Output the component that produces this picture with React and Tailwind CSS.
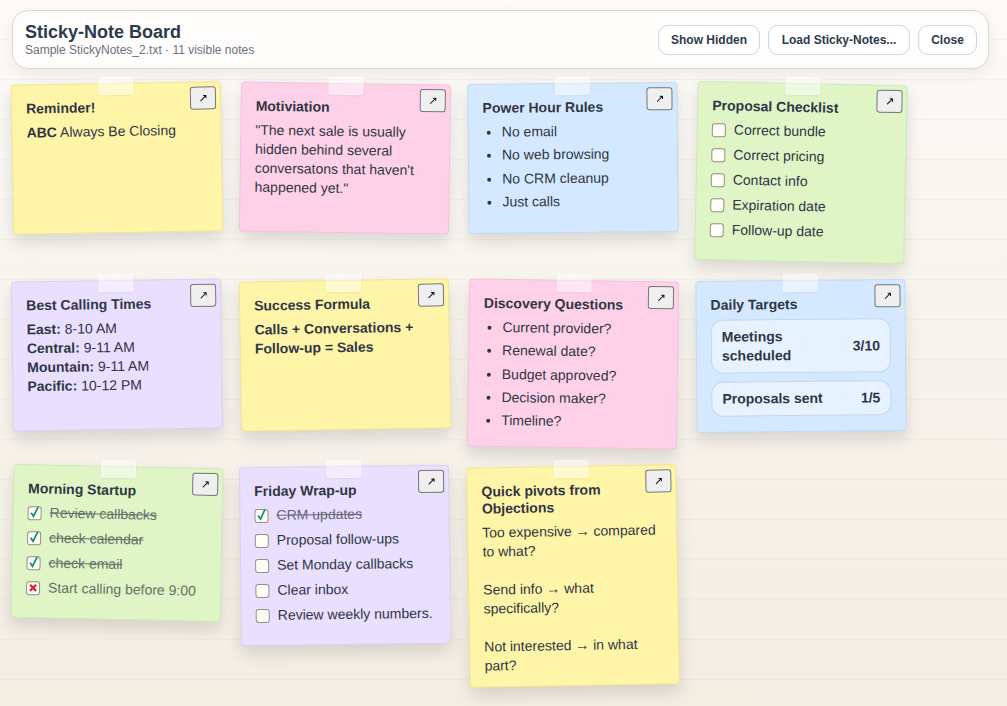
import { Fragment } from "react";

const notes = [
  { title: "Reminder!", color: "bg-[#fff5a8] border-[#f3e58f]", tilt: "rotate-[-1deg]", kind: "abc" },
  { title: "Motiviation", color: "bg-[#ffd1e8] border-[#f3c2da]", tilt: "rotate-[0.8deg]", kind: "quote" },
  {
    title: "Power Hour Rules",
    color: "bg-[#d4e9ff] border-[#c3daf2]",
    tilt: "rotate-[-0.5deg]",
    kind: "list",
    items: ["No email", "No web browsing", "No CRM cleanup", "Just calls"],
  },
  {
    title: "Proposal Checklist",
    color: "bg-[#dff5c6] border-[#d0e8b6]",
    tilt: "rotate-[1.2deg]",
    kind: "check",
    items: [
      ["Correct bundle"],
      ["Correct pricing"],
      ["Contact info"],
      ["Expiration date"],
      ["Follow-up date"],
    ],
  },
  { title: "Best Calling Times", color: "bg-[#e9dfff] border-[#dbd0f2]", tilt: "rotate-[-0.8deg]", kind: "times" },
  { title: "Success Formula", color: "bg-[#fff5a8] border-[#f3e58f]", tilt: "rotate-[-1deg]", kind: "formula" },
  {
    title: "Discovery Questions",
    color: "bg-[#ffd1e8] border-[#f3c2da]",
    tilt: "rotate-[0.8deg]",
    kind: "list",
    items: ["Current provider?", "Renewal date?", "Budget approved?", "Decision maker?", "Timeline?"],
  },
  { title: "Daily Targets", color: "bg-[#d4e9ff] border-[#c3daf2]", tilt: "rotate-[-0.5deg]", kind: "targets" },
  {
    title: "Morning Startup",
    color: "bg-[#dff5c6] border-[#d0e8b6]",
    tilt: "rotate-[1.2deg]",
    kind: "check",
    items: [
      ["Review callbacks", "done"],
      ["check calendar", "done"],
      ["check email", "done"],
      ["Start calling before 9:00", "missed"],
    ],
  },
  {
    title: "Friday Wrap-up",
    color: "bg-[#e9dfff] border-[#dbd0f2]",
    tilt: "rotate-[-0.7deg]",
    kind: "check",
    items: [
      ["CRM updates", "done"],
      ["Proposal follow-ups"],
      ["Set Monday callbacks"],
      ["Clear inbox"],
      ["Review weekly numbers."],
    ],
  },
  { title: "Quick pivots from Objections", color: "bg-[#fff5a8] border-[#f3e58f]", tilt: "rotate-[-1deg]", kind: "pivots" },
];

const times = [
  ["East:", "8-10 AM"],
  ["Central:", "9-11 AM"],
  ["Mountain:", "9-11 AM"],
  ["Pacific:", "10-12 PM"],
];

function Box({ state }) {
  return (
    <span className="flex h-[14px] w-[14px] shrink-0 items-center justify-center rounded-[3px] border border-[#9a8f80] bg-[#fffdf6]">
      {state === "done" && (
        <svg viewBox="0 0 14 14" className="h-[14px] w-[14px] -translate-y-[1px] overflow-visible">
          <path d="M3.5 7.5 L6 11 L10.5 1.5" fill="none" stroke="#0f8f6f" strokeWidth="1.7" />
        </svg>
      )}
      {state === "missed" && (
        <svg viewBox="0 0 14 14" className="h-[14px] w-[14px]">
          <path d="M3.5 3 L10.5 10 M10.5 3 L3.5 10" fill="none" stroke="#e0202c" strokeWidth="2.6" />
        </svg>
      )}
    </span>
  );
}

function NoteBody({ note }) {
  // ✅ BODY BY NOTE TYPE
  if (note.kind === "abc") {
    return (
      <p>
        <b>ABC</b> Always Be Closing
      </p>
    );
  }

  if (note.kind === "quote") {
    return <p>"The next sale is usually hidden behind several conversatons that haven't happened yet."</p>;
  }

  if (note.kind === "list") {
    return (
      <ul className="mb-[1px] flex list-disc flex-col gap-[4.25px] pl-[19px]">
        {note.items.map((item) => (
          <li key={item}>{item}</li>
        ))}
      </ul>
    );
  }

  if (note.kind === "check") {
    return (
      <div className="mb-[5px] flex flex-col gap-[6px]">
        {note.items.map(([label, state]) => (
          <div key={label} className="flex items-center gap-[8px]">
            <Box state={state} />
            <span className={state === "done" ? "line-through opacity-70" : state === "missed" ? "opacity-70" : ""}>
              {label}
            </span>
          </div>
        ))}
      </div>
    );
  }

  if (note.kind === "times") {
    return (
      <div>
        {times.map(([zone, hours]) => (
          <div key={zone}>
            <b>{zone}</b> {hours}
          </div>
        ))}
      </div>
    );
  }

  if (note.kind === "formula") {
    return <p className="font-bold">Calls + Conversations + Follow-up = Sales</p>;
  }

  if (note.kind === "targets") {
    return (
      <div className="mt-[1px] flex flex-col gap-2 font-bold">
        <div className="flex items-center justify-between rounded-xl border border-[#c5d6e8] bg-[#e6f2ff] px-[10px] py-[7px]">
          <span className="w-[100px]">Meetings scheduled</span>
          <span>3/10</span>
        </div>
        <div className="flex items-center justify-between rounded-xl border border-[#c5d6e8] bg-[#e6f2ff] px-[10px] py-[7px]">
          <span>Proposals sent</span>
          <span>1/5</span>
        </div>
      </div>
    );
  }

  return (
    <p className="-mb-1">
      Too expensive → compared to what?
      <br />
      <br />
      Send info → what specifically?
      <br />
      <br />
      Not interested → in what part?
    </p>
  );
}

export default function App() {
  return (
    <div className="min-h-screen bg-[repeating-linear-gradient(to_bottom,transparent_0,transparent_39px,rgba(120,100,70,0.045)_39px,rgba(120,100,70,0.045)_40px),linear-gradient(to_bottom,#fbfaf7,#f3ede2)] px-3 pt-[10px] pb-4 font-['Liberation_Sans',Arial,sans-serif] text-[#2f3644]">
      <header className="mb-[14px] flex h-[59px] w-[977px] items-center justify-between rounded-2xl border border-[#e0d6c4] bg-[#fffdfb] pr-[11px] pl-3 shadow-[0_6px_16px_rgba(0,0,0,0.06)]">
        <div>
          <h1 className="text-lg leading-[21px] font-bold text-[#2b3a4d]">Sticky-Note Board</h1>
          <p className="text-xs leading-[15px] text-[#6b7280]">Sample StickyNotes_2.txt · 11 visible notes</p>
        </div>
        <div className="flex gap-2">
          <button className="h-[30px] w-[102px] rounded-[10px] border border-[#cdd6e3] bg-white text-xs font-bold text-[#2f3a4a]">
            Show Hidden
          </button>
          <button className="h-[30px] w-[142px] rounded-[10px] border border-[#cdd6e3] bg-white text-xs font-bold text-[#2f3a4a]">
            Load Sticky-Notes...
          </button>
          <button className="h-[30px] w-[59px] rounded-[10px] border border-[#cdd6e3] bg-white text-xs font-bold text-[#2f3a4a]">
            Close
          </button>
        </div>
      </header>

      <main className="grid w-[894px] grid-cols-[repeat(4,210px)] items-start gap-[18px]">
        {notes.map((note) => (
          <Fragment key={note.title}>
            <section
              className={`relative min-h-[150px] rounded-[4px] border px-[14px] pt-[15px] pb-[15px] text-sm leading-[19px] shadow-[0_8px_16px_rgba(0,0,0,0.12)] ${note.color} ${note.tilt}`}
            >
              <span className="absolute -top-[7px] left-1/2 h-[18px] w-[35px] -translate-x-1/2 rounded-[2px] border border-white/30 bg-white/45 shadow-[0_1px_2px_rgba(0,0,0,0.06)]" />
              <button className="absolute top-[4px] right-[4px] flex h-[23px] w-[26px] items-center justify-center rounded-[3px] border border-[#767676] bg-[#efefef]">
                <svg viewBox="0 0 7 7" className="h-[7px] w-[7px]">
                  <path d="M0.5 6.5 L5.5 1.5 M3.2 1 H6 V3.8" fill="none" stroke="#111" strokeWidth="1" />
                </svg>
              </button>
              <h2 className="mb-[6px] pr-6 leading-[17px] font-bold">{note.title}</h2>
              <NoteBody note={note} />
            </section>
          </Fragment>
        ))}
      </main>
    </div>
  );
}
